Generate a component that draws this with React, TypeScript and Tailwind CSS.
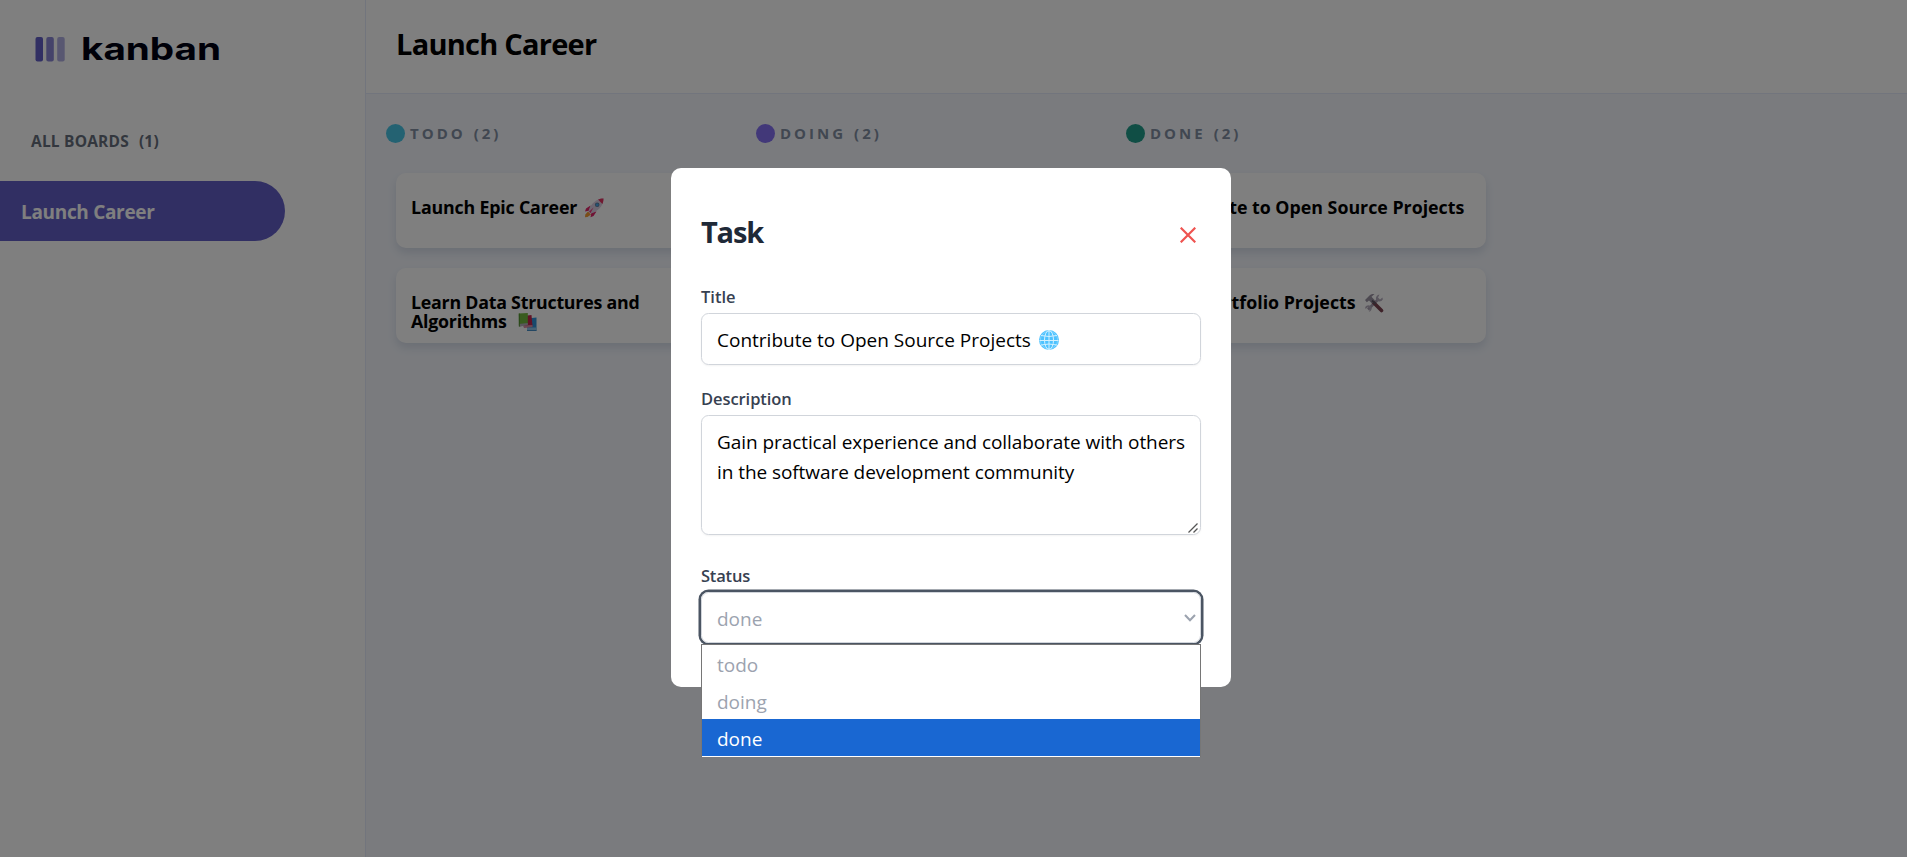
import type { ReactNode } from "react";

function Rocket() {
  return (
    <svg viewBox="0 0 20 20" className="ml-[7px] inline-block h-5 w-5 align-[-4px]">
      <path d="M4 13.5 7 16.5 3.5 19 1 19.200 1.300 16.500Z" fill="#f59b32" />
      <path d="M6.500 7.500 2 10.500 1 13.500 6 12.500ZM12.500 13.500 9.500 18 6.500 19.200 7.500 14Z" fill="#e0276b" />
      <path d="M19.500.5C14 .5 9 3.500 5.500 10L4.500 13.500 6.500 15.500 10 14.500C16.500 11 19.500 6 19.500.5Z" fill="#dccfe2" />
      <path d="M19.500.5C17.500.4 15.500.9 14 1.600L18.400 6C19.200 4.300 19.500 2.500 19.500.5Z" fill="#e23360" />
      <circle cx="13.200" cy="6.800" r="2.300" fill="#5b7f9e" />
      <circle cx="13.200" cy="6.800" r="1.400" fill="#4aa6e8" />
      <path d="M9.500 9.500 6.500 15 5 13.700Z" fill="#f0327a" />
    </svg>
  );
}

function Books() {
  return (
    <svg viewBox="0 0 20 20" className="ml-[11px] inline-block h-5 w-5 align-[-4px]">
      <path d="M9 6.500 18.500 5.500V18.500H9Z" fill="#3193d8" />
      <path d="M9 15.500H18.500V18.500H9Z" fill="#8fc4ea" />
      <path d="M9 18.300H18.500V19H9Z" fill="#2678b8" />
      <path d="M5 4 13.500 3 14.500 14.500 6 15.500Z" fill="#c2274c" />
      <path d="M5 13.500 14.500 13V15L6 16Z" fill="#d88fa6" />
      <path d="M.8 1.500 9.800 1V12.500L1 14.500Z" fill="#72b83f" />
      <path d="M.8 12 9.800 11V13L1.500 14.800Z" fill="#b5aeb8" />
      <path d="M.8 1.500H1.800V14.500H.8Z" fill="#4f8f2e" />
    </svg>
  );
}

function Tools() {
  return (
    <svg viewBox="0 0 20 20" className="ml-[8px] inline-block h-5 w-5 align-[-4px]">
      <path d="M4 16.500 14 6.500" stroke="#a79fb0" strokeWidth="2.600" />
      <path d="M18.500 4.500 16 6.500 14 4.500 15.500 1.500A4 4 0 0 0 12 6.500 3.800 3.800 0 0 0 18.800 6.500ZM1.500 16 4 14 6.200 16 4.800 18.800A3.600 3.600 0 0 0 7.500 14 3.800 3.800 0 0 0 1.200 14Z" fill="#b5adbd" />
      <path d="M9.500 9.500 17.500 17.500" stroke="#7c4552" strokeWidth="3.600" strokeLinecap="round" />
      <path d="M1 7 5.500 2.500C7 1.200 9 .8 10.500 1L7.500 3.800 11 7.500 8 10.500 5 7.500 2.800 9.200Z" fill="#9a93a3" />
      <path d="M8 7.500 11.500 11" stroke="#5d5564" strokeWidth="2" />
    </svg>
  );
}

function Globe() {
  return (
    <svg viewBox="0 0 20 20" className="mt-[2px] ml-[8px] h-5 w-5">
      <circle cx="10" cy="10" r="10" fill="#4cc2ff" />
      <g fill="none" stroke="#d3f1ff" strokeWidth="1">
        <circle cx="10" cy="10" r="8.700" strokeOpacity=".35" />
        <ellipse cx="10" cy="10" rx="4.500" ry="9.500" />
        <path d="M10 .5V19.500M.5 10.500H19.500M2 5.500Q10 7.500 18 5.500M2 15Q10 13 18 15" />
      </g>
    </svg>
  );
}

type Task = { title: string; tracking: string; icon?: ReactNode };
type Column = { name: string; count: number; dot: string; tasks: Task[] };

const columns: Column[] = [
  {
    name: "TODO",
    count: 2,
    dot: "bg-[#49c4e5]",
    tasks: [
      { title: "Launch Epic Career", tracking: "tracking-[-0.17px]", icon: <Rocket /> },
      { title: "Learn Data Structures and Algorithms", tracking: "tracking-[-0.23px]", icon: <Books /> },
    ],
  },
  { name: "DOING", count: 2, dot: "bg-[#8471f2]", tasks: [] },
  {
    name: "DONE",
    count: 2,
    dot: "bg-[#219c8a]",
    tasks: [
      { title: "Contribute to Open Source Projects", tracking: "tracking-normal" },
      { title: "Build Portfolio Projects", tracking: "tracking-normal", icon: <Tools /> },
    ],
  },
];

function Logo() {
  return (
    <svg viewBox="0 0 200 40" className="ml-[31px] mt-[30px] h-[40px] w-[200px]">
      <rect x="4.500" y="7" width="7.500" height="24.500" rx="2" fill="#635fc7" />
      <rect x="15.300" y="7" width="7.500" height="24.500" rx="2" fill="#635fc7" opacity=".75" />
      <rect x="26.200" y="7" width="7.500" height="24.500" rx="2" fill="#635fc7" opacity=".5" />
      <text x="50" y="30.300" textLength="140" lengthAdjust="spacingAndGlyphs" className="fill-[#000112] font-['Inter'] text-[31.500px] font-bold">
        kanban
      </text>
    </svg>
  );
}

function Sidebar() {
  return (
    <aside className="flex w-[366px] shrink-0 flex-col border-r border-[#e4ebfa] bg-white">
      <Logo />
      <p className="mt-[59px] ml-[31px] flex gap-[10px] text-[15.500px] leading-[24px] font-bold tracking-[0.2px] text-[#666f7c]">
        <span>ALL BOARDS</span>
        <span>(1)</span>
      </p>
      <div className="mt-[28px] flex h-[60px] w-[285px] items-center rounded-r-full bg-[#635fc7] pt-[2px] pl-[21px] text-[19px] font-bold tracking-[-0.32px] text-white">
        Launch Career
      </div>
    </aside>
  );
}

function ColumnView({ column }: { column: Column }) {
  return (
    <section className="w-[370px] shrink-0">
      <h2 className="flex h-[19px] items-center text-[15px] font-bold tracking-[3px] text-[#828fa3]">
        <span className={`mr-[5px] h-[19px] w-[19px] rounded-full ${column.dot}`} />
        <span>{column.name}</span>
        <span className="ml-[8px]">({column.count})</span>
      </h2>
      <div className="mt-[30px] ml-[10px] flex w-[350px] flex-col gap-[20px]">
        {column.tasks.map((task) => (
          <article
            key={task.title}
            className={`h-[75px] rounded-[10px] bg-white px-[15px] pt-[25px] text-[17.800px] leading-[19px] font-bold text-black shadow-[0_5px_8px_rgba(54,78,126,0.15)] ${task.tracking}`}
          >
            {task.title}
            {task.icon}
          </article>
        ))}
      </div>
    </section>
  );
}

function TaskModal() {
  return (
    <div className="fixed inset-0 flex items-center justify-center bg-black/50 pr-[5px] pb-[2px]">
      <div className="h-[519px] w-[560px] rounded-[10px] bg-white px-[30px] pt-[44px]">
        <header className="flex h-[40px] items-center justify-between">
          <h2 className="text-[29px] leading-[40px] font-bold tracking-[-1.200px] text-[#1f2937]">Task</h2>
          <svg viewBox="0 0 16 16" className="mt-[5px] mr-[5px] h-4 w-4" stroke="#ef5350" strokeWidth="2.200">
            <path d="M.7.7 15.300 15.300M15.300.7.7 15.300" />
          </svg>
        </header>
        <div className="mt-[32px] text-[16.500px] leading-[25px] font-semibold text-[#374151]">Title</div>
        <div className="mt-[4px] flex h-[52px] items-center rounded-[7.500px] border border-[#d1d5db] px-[15px] text-[19px] text-black shadow-xs">
          <span className="pt-[2px]">Contribute to Open Source Projects</span>
          <Globe />
        </div>
        <div className="mt-[21px] text-[16.500px] leading-[25px] font-semibold tracking-[-0.070px] text-[#374151]">Description</div>
        <div className="relative mt-[4px] h-[120px] rounded-[7.500px] border border-[#d1d5db] px-[15px] pt-[11px] text-[19px] leading-[30px] tracking-[-0.070px] whitespace-nowrap text-black shadow-xs">
          Gain practical experience and collaborate with others
          <br />
          in the software development community
          <svg viewBox="0 0 10 10" className="absolute right-[2px] bottom-[1px] h-[10px] w-[10px]" stroke="#555" strokeWidth="1.300">
            <path d="M.5 9.500 9.500.5M5.500 9.500 9.500 5.500" />
          </svg>
        </div>
        <div className="mt-[28px] text-[16.500px] leading-[25px] font-semibold tracking-[-0.200px] text-[#374151]">Status</div>
        <div className="relative mt-[4px] h-[51px]">
          <div className="flex h-full items-center justify-between rounded-[7.500px] border border-[#d1d5db] pr-[4px] pl-[15px] text-[19px] text-[#9ca3af] ring-[2.500px] ring-[#4b5563]">
            <span className="pt-[3px]">done</span>
            <svg viewBox="0 0 12 8" className="h-[8px] w-[12px]" fill="none" stroke="#9ca3af" strokeWidth="2.100">
              <path d="M1 1 6 6.200 11 1" />
            </svg>
          </div>
          <ul className="absolute top-[52px] left-0 h-[113px] w-[500px] border border-b-0 border-[#767676] bg-white text-[19px] leading-[40px] text-[#9ca3af]">
            <li className="h-[37px] pl-[15px]">todo</li>
            <li className="h-[37px] pl-[15px]">doing</li>
            <li className="h-[37px] bg-[#1967d2] pl-[15px] text-white">done</li>
          </ul>
        </div>
      </div>
    </div>
  );
}

export default function App() {
  return (
    <div className="flex h-[857px] w-[1907px] overflow-hidden bg-[#f4f7fd] font-['Open_Sans','Noto_Sans',sans-serif]">
      <Sidebar />
      <main className="flex min-w-0 flex-1 flex-col">
        <header className="h-[94px] border-b border-[#e4ebfa] bg-white pt-[24px] pl-[30px] text-[29px] leading-[40px] font-bold tracking-[-0.750px] text-black">
          Launch Career
        </header>
        <div className="flex pt-[30px] pl-[20px]">
          {columns.map((column) => (
            <ColumnView key={column.name} column={column} />
          ))}
        </div>
      </main>
      <TaskModal />
    </div>
  );
}
